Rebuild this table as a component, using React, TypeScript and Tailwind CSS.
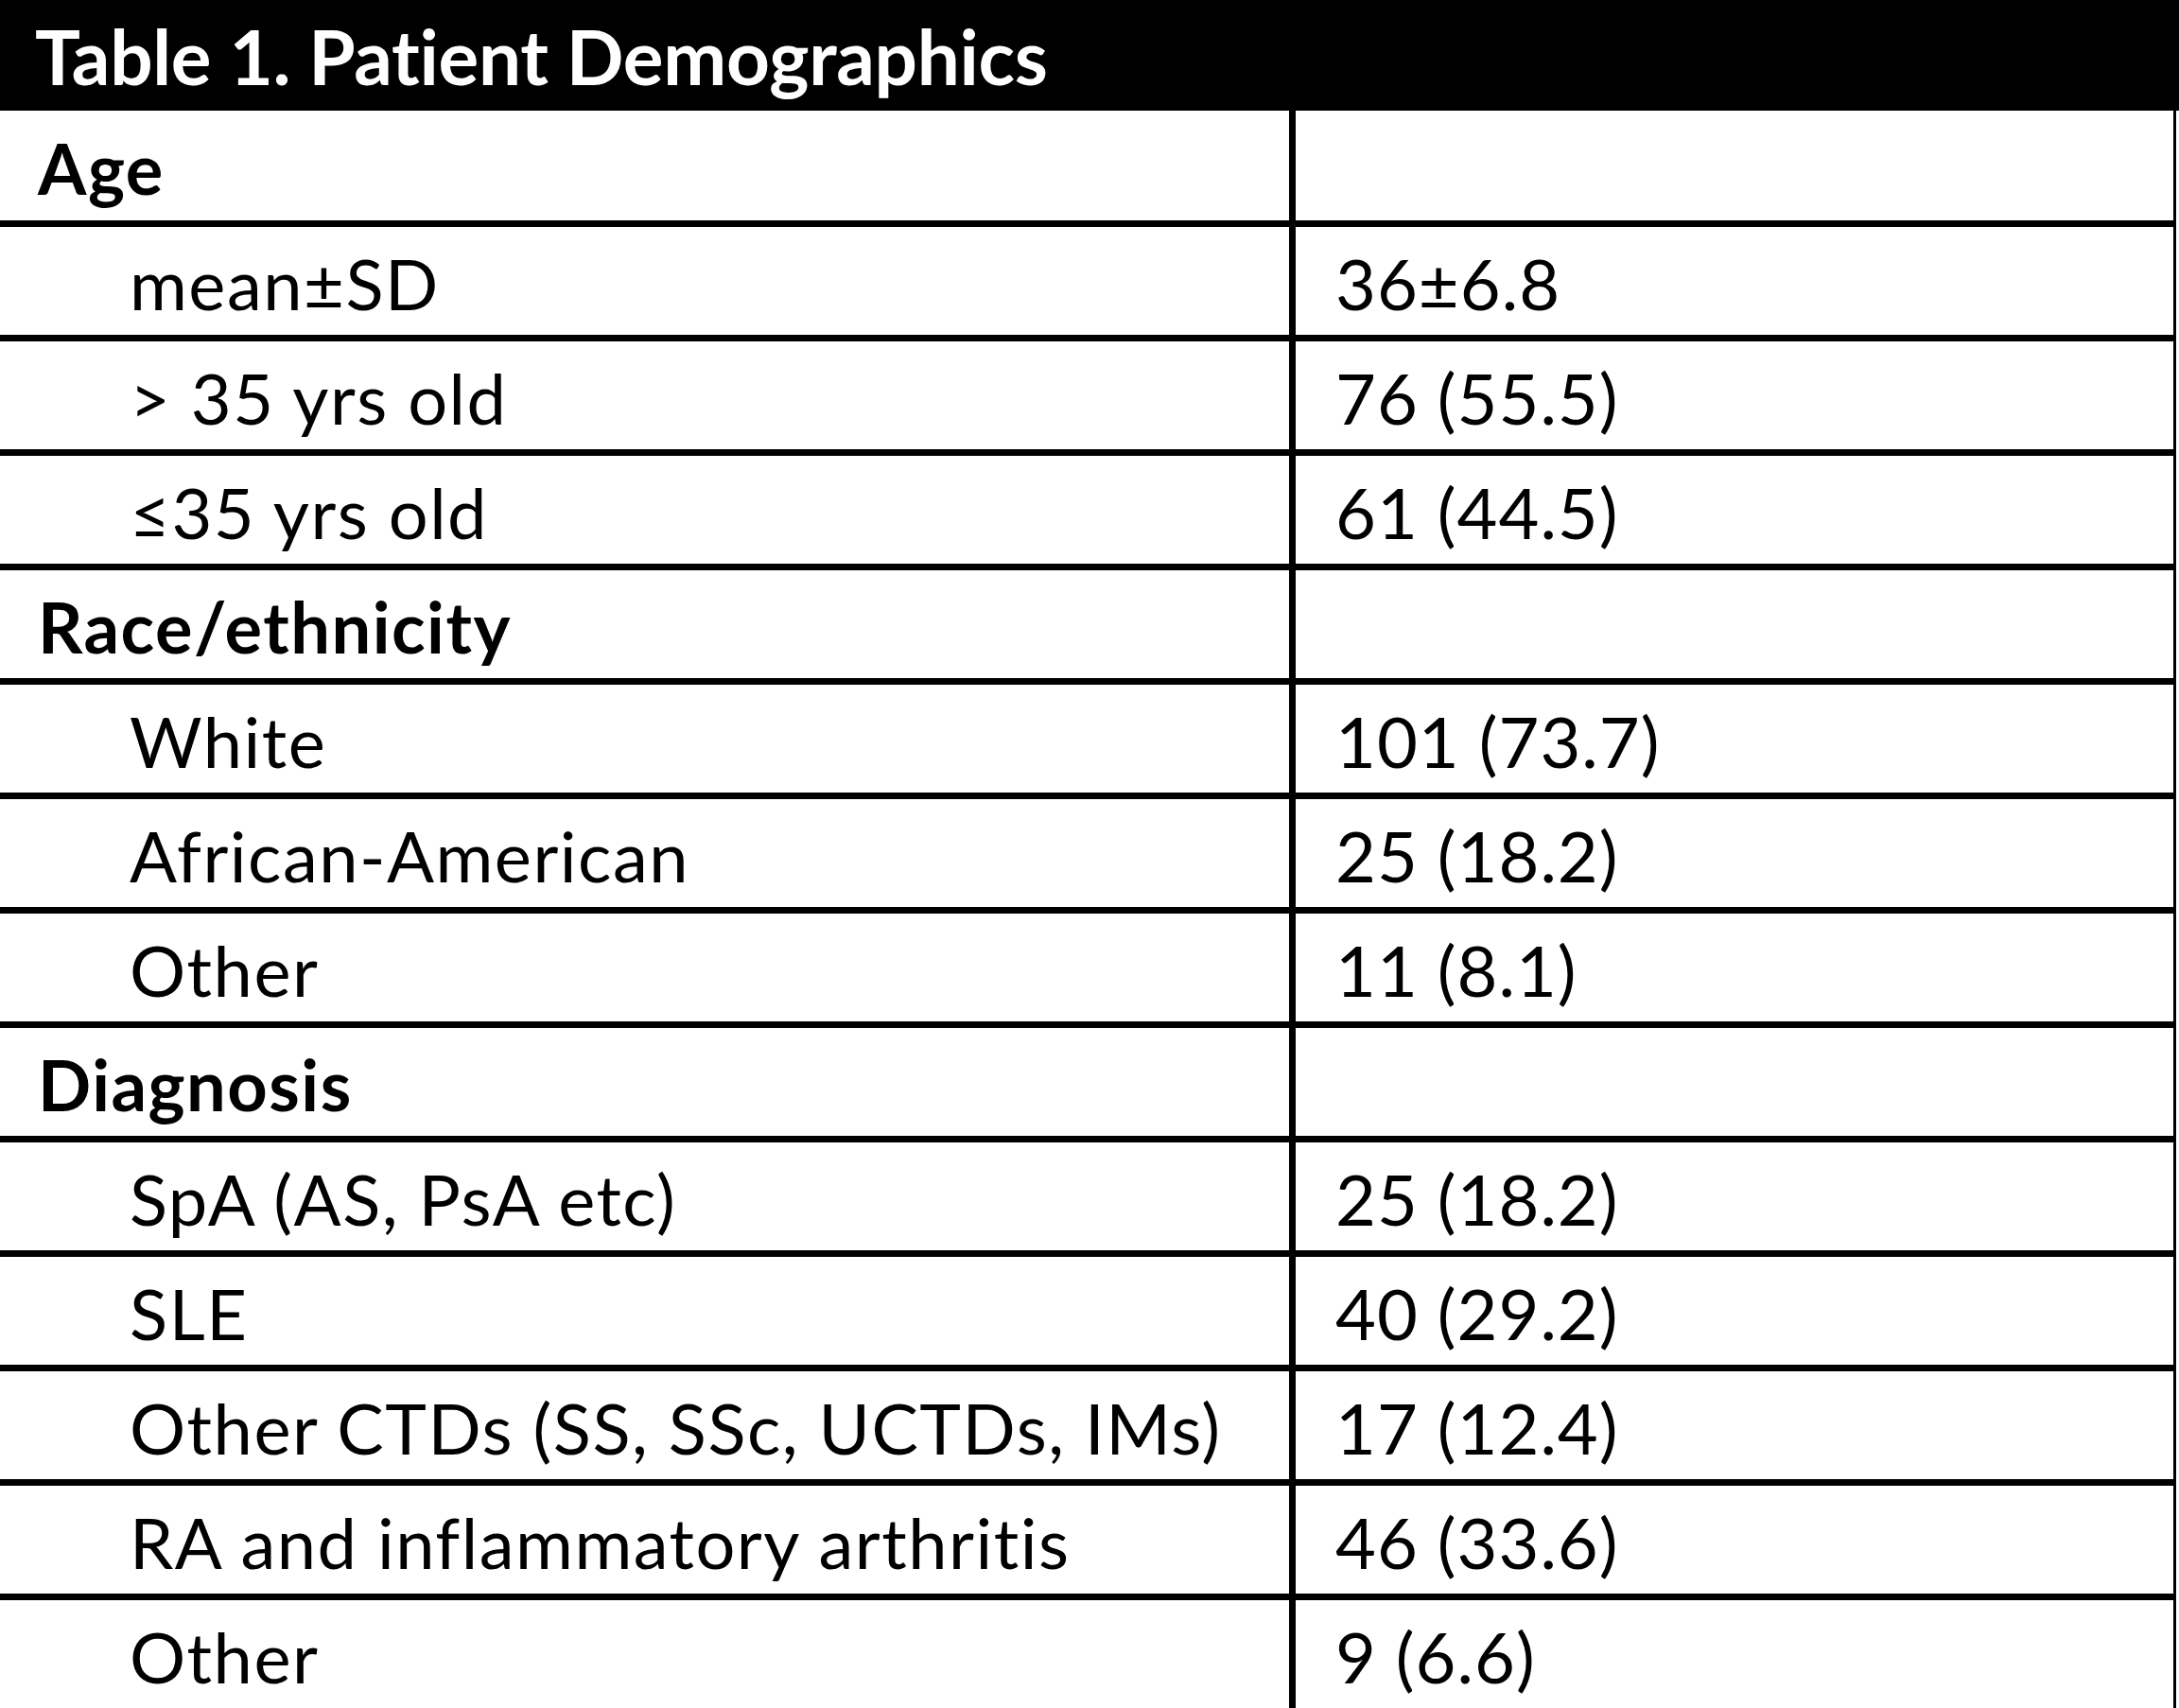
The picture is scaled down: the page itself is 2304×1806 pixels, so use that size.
import React from "react"

type Row = { label: string; value?: string; heading?: boolean }

const rows: Row[] = [
  { label: "Age", heading: true },
  { label: "mean±SD", value: "36±6.8" },
  { label: "> 35 yrs old", value: "76 (55.5)" },
  { label: "≤35 yrs old", value: "61 (44.5)" },
  { label: "Race/ethnicity", heading: true },
  { label: "White", value: "101 (73.7)" },
  { label: "African-American", value: "25 (18.2)" },
  { label: "Other", value: "11 (8.1)" },
  { label: "Diagnosis", heading: true },
  { label: "SpA (AS, PsA etc)", value: "25 (18.2)" },
  { label: "SLE", value: "40 (29.2)" },
  { label: "Other CTDs (SS, SSc, UCTDs, IMs)", value: "17 (12.4)" },
  { label: "RA and inflammatory arthritis", value: "46 (33.6)" },
  { label: "Other", value: "9 (6.6)" },
]

export default function App() {
  return (
    <div
      className="w-[2304px] h-[1806px] overflow-hidden bg-white text-black"
      style={{ fontFamily: "Lato, 'Open Sans', sans-serif" }}
    >
      {/* title bar */}
      <div className="h-[117px] bg-black flex items-center pl-[37px]">
        <h1 className="text-white font-bold text-[80px] leading-none tracking-[-0.3px]">
          Table 1. Patient Demographics
        </h1>
      </div>

      <div className="w-[2301px] border-r-[3px] border-black">
        {rows.map((row, i) => (
          <div
            key={i}
            className={`flex border-b-[7px] border-black ${i === 0 ? "h-[123px]" : "h-[121px]"}`}
          >
            <div
              className={`w-[1370px] shrink-0 border-r-[7px] border-black flex items-center pt-[4px] text-[74px] tracking-[1.5px] ${
                row.heading ? "font-bold pl-[40px]" : "pl-[137px]"
              }`}
            >
              {row.label}
            </div>
            <div className="flex-1 flex items-center pl-[42px] pt-[4px] text-[74px] tracking-[1px]">
              {row.value}
            </div>
          </div>
        ))}
      </div>
    </div>
  )
}
